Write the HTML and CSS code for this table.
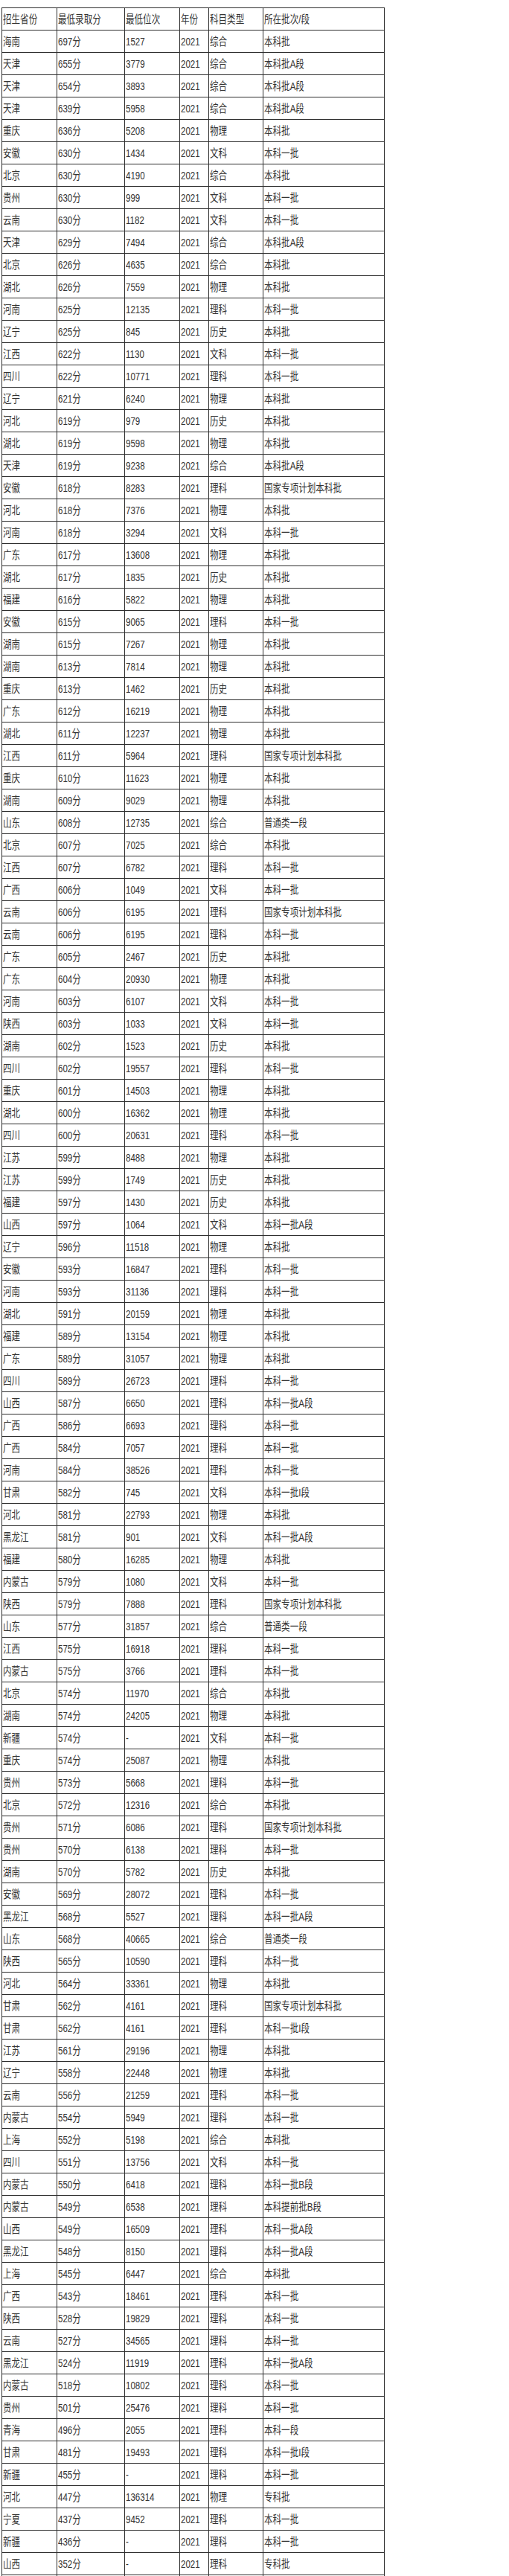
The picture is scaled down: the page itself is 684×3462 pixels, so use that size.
FILE: index.html
```html
<!DOCTYPE html>
<html lang="zh-CN">
<head>
<meta charset="utf-8">
<title>录取分数</title>
<link rel="stylesheet" href="styles.css">
</head>
<body>
<table class="scores">
<colgroup><col class="c1"><col class="c2"><col class="c3"><col class="c4"><col class="c5"><col class="c6"></colgroup>
<tbody>
<tr><td><span>招生省份</span></td><td><span>最低录取分</span></td><td><span>最低位次</span></td><td><span>年份</span></td><td><span>科目类型</span></td><td><span>所在批次/段</span></td></tr>
<tr><td><span>海南</span></td><td><span>697分</span></td><td><span>1527</span></td><td><span>2021</span></td><td><span>综合</span></td><td><span>本科批</span></td></tr>
<tr><td><span>天津</span></td><td><span>655分</span></td><td><span>3779</span></td><td><span>2021</span></td><td><span>综合</span></td><td><span>本科批A段</span></td></tr>
<tr><td><span>天津</span></td><td><span>654分</span></td><td><span>3893</span></td><td><span>2021</span></td><td><span>综合</span></td><td><span>本科批A段</span></td></tr>
<tr><td><span>天津</span></td><td><span>639分</span></td><td><span>5958</span></td><td><span>2021</span></td><td><span>综合</span></td><td><span>本科批A段</span></td></tr>
<tr><td><span>重庆</span></td><td><span>636分</span></td><td><span>5208</span></td><td><span>2021</span></td><td><span>物理</span></td><td><span>本科批</span></td></tr>
<tr><td><span>安徽</span></td><td><span>630分</span></td><td><span>1434</span></td><td><span>2021</span></td><td><span>文科</span></td><td><span>本科一批</span></td></tr>
<tr><td><span>北京</span></td><td><span>630分</span></td><td><span>4190</span></td><td><span>2021</span></td><td><span>综合</span></td><td><span>本科批</span></td></tr>
<tr><td><span>贵州</span></td><td><span>630分</span></td><td><span>999</span></td><td><span>2021</span></td><td><span>文科</span></td><td><span>本科一批</span></td></tr>
<tr><td><span>云南</span></td><td><span>630分</span></td><td><span>1182</span></td><td><span>2021</span></td><td><span>文科</span></td><td><span>本科一批</span></td></tr>
<tr><td><span>天津</span></td><td><span>629分</span></td><td><span>7494</span></td><td><span>2021</span></td><td><span>综合</span></td><td><span>本科批A段</span></td></tr>
<tr><td><span>北京</span></td><td><span>626分</span></td><td><span>4635</span></td><td><span>2021</span></td><td><span>综合</span></td><td><span>本科批</span></td></tr>
<tr><td><span>湖北</span></td><td><span>626分</span></td><td><span>7559</span></td><td><span>2021</span></td><td><span>物理</span></td><td><span>本科批</span></td></tr>
<tr><td><span>河南</span></td><td><span>625分</span></td><td><span>12135</span></td><td><span>2021</span></td><td><span>理科</span></td><td><span>本科一批</span></td></tr>
<tr><td><span>辽宁</span></td><td><span>625分</span></td><td><span>845</span></td><td><span>2021</span></td><td><span>历史</span></td><td><span>本科批</span></td></tr>
<tr><td><span>江西</span></td><td><span>622分</span></td><td><span>1130</span></td><td><span>2021</span></td><td><span>文科</span></td><td><span>本科一批</span></td></tr>
<tr><td><span>四川</span></td><td><span>622分</span></td><td><span>10771</span></td><td><span>2021</span></td><td><span>理科</span></td><td><span>本科一批</span></td></tr>
<tr><td><span>辽宁</span></td><td><span>621分</span></td><td><span>6240</span></td><td><span>2021</span></td><td><span>物理</span></td><td><span>本科批</span></td></tr>
<tr><td><span>河北</span></td><td><span>619分</span></td><td><span>979</span></td><td><span>2021</span></td><td><span>历史</span></td><td><span>本科批</span></td></tr>
<tr><td><span>湖北</span></td><td><span>619分</span></td><td><span>9598</span></td><td><span>2021</span></td><td><span>物理</span></td><td><span>本科批</span></td></tr>
<tr><td><span>天津</span></td><td><span>619分</span></td><td><span>9238</span></td><td><span>2021</span></td><td><span>综合</span></td><td><span>本科批A段</span></td></tr>
<tr><td><span>安徽</span></td><td><span>618分</span></td><td><span>8283</span></td><td><span>2021</span></td><td><span>理科</span></td><td><span>国家专项计划本科批</span></td></tr>
<tr><td><span>河北</span></td><td><span>618分</span></td><td><span>7376</span></td><td><span>2021</span></td><td><span>物理</span></td><td><span>本科批</span></td></tr>
<tr><td><span>河南</span></td><td><span>618分</span></td><td><span>3294</span></td><td><span>2021</span></td><td><span>文科</span></td><td><span>本科一批</span></td></tr>
<tr><td><span>广东</span></td><td><span>617分</span></td><td><span>13608</span></td><td><span>2021</span></td><td><span>物理</span></td><td><span>本科批</span></td></tr>
<tr><td><span>湖北</span></td><td><span>617分</span></td><td><span>1835</span></td><td><span>2021</span></td><td><span>历史</span></td><td><span>本科批</span></td></tr>
<tr><td><span>福建</span></td><td><span>616分</span></td><td><span>5822</span></td><td><span>2021</span></td><td><span>物理</span></td><td><span>本科批</span></td></tr>
<tr><td><span>安徽</span></td><td><span>615分</span></td><td><span>9065</span></td><td><span>2021</span></td><td><span>理科</span></td><td><span>本科一批</span></td></tr>
<tr><td><span>湖南</span></td><td><span>615分</span></td><td><span>7267</span></td><td><span>2021</span></td><td><span>物理</span></td><td><span>本科批</span></td></tr>
<tr><td><span>湖南</span></td><td><span>613分</span></td><td><span>7814</span></td><td><span>2021</span></td><td><span>物理</span></td><td><span>本科批</span></td></tr>
<tr><td><span>重庆</span></td><td><span>613分</span></td><td><span>1462</span></td><td><span>2021</span></td><td><span>历史</span></td><td><span>本科批</span></td></tr>
<tr><td><span>广东</span></td><td><span>612分</span></td><td><span>16219</span></td><td><span>2021</span></td><td><span>物理</span></td><td><span>本科批</span></td></tr>
<tr><td><span>湖北</span></td><td><span>611分</span></td><td><span>12237</span></td><td><span>2021</span></td><td><span>物理</span></td><td><span>本科批</span></td></tr>
<tr><td><span>江西</span></td><td><span>611分</span></td><td><span>5964</span></td><td><span>2021</span></td><td><span>理科</span></td><td><span>国家专项计划本科批</span></td></tr>
<tr><td><span>重庆</span></td><td><span>610分</span></td><td><span>11623</span></td><td><span>2021</span></td><td><span>物理</span></td><td><span>本科批</span></td></tr>
<tr><td><span>湖南</span></td><td><span>609分</span></td><td><span>9029</span></td><td><span>2021</span></td><td><span>物理</span></td><td><span>本科批</span></td></tr>
<tr><td><span>山东</span></td><td><span>608分</span></td><td><span>12735</span></td><td><span>2021</span></td><td><span>综合</span></td><td><span>普通类一段</span></td></tr>
<tr><td><span>北京</span></td><td><span>607分</span></td><td><span>7025</span></td><td><span>2021</span></td><td><span>综合</span></td><td><span>本科批</span></td></tr>
<tr><td><span>江西</span></td><td><span>607分</span></td><td><span>6782</span></td><td><span>2021</span></td><td><span>理科</span></td><td><span>本科一批</span></td></tr>
<tr><td><span>广西</span></td><td><span>606分</span></td><td><span>1049</span></td><td><span>2021</span></td><td><span>文科</span></td><td><span>本科一批</span></td></tr>
<tr><td><span>云南</span></td><td><span>606分</span></td><td><span>6195</span></td><td><span>2021</span></td><td><span>理科</span></td><td><span>国家专项计划本科批</span></td></tr>
<tr><td><span>云南</span></td><td><span>606分</span></td><td><span>6195</span></td><td><span>2021</span></td><td><span>理科</span></td><td><span>本科一批</span></td></tr>
<tr><td><span>广东</span></td><td><span>605分</span></td><td><span>2467</span></td><td><span>2021</span></td><td><span>历史</span></td><td><span>本科批</span></td></tr>
<tr><td><span>广东</span></td><td><span>604分</span></td><td><span>20930</span></td><td><span>2021</span></td><td><span>物理</span></td><td><span>本科批</span></td></tr>
<tr><td><span>河南</span></td><td><span>603分</span></td><td><span>6107</span></td><td><span>2021</span></td><td><span>文科</span></td><td><span>本科一批</span></td></tr>
<tr><td><span>陕西</span></td><td><span>603分</span></td><td><span>1033</span></td><td><span>2021</span></td><td><span>文科</span></td><td><span>本科一批</span></td></tr>
<tr><td><span>湖南</span></td><td><span>602分</span></td><td><span>1523</span></td><td><span>2021</span></td><td><span>历史</span></td><td><span>本科批</span></td></tr>
<tr><td><span>四川</span></td><td><span>602分</span></td><td><span>19557</span></td><td><span>2021</span></td><td><span>理科</span></td><td><span>本科一批</span></td></tr>
<tr><td><span>重庆</span></td><td><span>601分</span></td><td><span>14503</span></td><td><span>2021</span></td><td><span>物理</span></td><td><span>本科批</span></td></tr>
<tr><td><span>湖北</span></td><td><span>600分</span></td><td><span>16362</span></td><td><span>2021</span></td><td><span>物理</span></td><td><span>本科批</span></td></tr>
<tr><td><span>四川</span></td><td><span>600分</span></td><td><span>20631</span></td><td><span>2021</span></td><td><span>理科</span></td><td><span>本科一批</span></td></tr>
<tr><td><span>江苏</span></td><td><span>599分</span></td><td><span>8488</span></td><td><span>2021</span></td><td><span>物理</span></td><td><span>本科批</span></td></tr>
<tr><td><span>江苏</span></td><td><span>599分</span></td><td><span>1749</span></td><td><span>2021</span></td><td><span>历史</span></td><td><span>本科批</span></td></tr>
<tr><td><span>福建</span></td><td><span>597分</span></td><td><span>1430</span></td><td><span>2021</span></td><td><span>历史</span></td><td><span>本科批</span></td></tr>
<tr><td><span>山西</span></td><td><span>597分</span></td><td><span>1064</span></td><td><span>2021</span></td><td><span>文科</span></td><td><span>本科一批A段</span></td></tr>
<tr><td><span>辽宁</span></td><td><span>596分</span></td><td><span>11518</span></td><td><span>2021</span></td><td><span>物理</span></td><td><span>本科批</span></td></tr>
<tr><td><span>安徽</span></td><td><span>593分</span></td><td><span>16847</span></td><td><span>2021</span></td><td><span>理科</span></td><td><span>本科一批</span></td></tr>
<tr><td><span>河南</span></td><td><span>593分</span></td><td><span>31136</span></td><td><span>2021</span></td><td><span>理科</span></td><td><span>本科一批</span></td></tr>
<tr><td><span>湖北</span></td><td><span>591分</span></td><td><span>20159</span></td><td><span>2021</span></td><td><span>物理</span></td><td><span>本科批</span></td></tr>
<tr><td><span>福建</span></td><td><span>589分</span></td><td><span>13154</span></td><td><span>2021</span></td><td><span>物理</span></td><td><span>本科批</span></td></tr>
<tr><td><span>广东</span></td><td><span>589分</span></td><td><span>31057</span></td><td><span>2021</span></td><td><span>物理</span></td><td><span>本科批</span></td></tr>
<tr><td><span>四川</span></td><td><span>589分</span></td><td><span>26723</span></td><td><span>2021</span></td><td><span>理科</span></td><td><span>本科一批</span></td></tr>
<tr><td><span>山西</span></td><td><span>587分</span></td><td><span>6650</span></td><td><span>2021</span></td><td><span>理科</span></td><td><span>本科一批A段</span></td></tr>
<tr><td><span>广西</span></td><td><span>586分</span></td><td><span>6693</span></td><td><span>2021</span></td><td><span>理科</span></td><td><span>本科一批</span></td></tr>
<tr><td><span>广西</span></td><td><span>584分</span></td><td><span>7057</span></td><td><span>2021</span></td><td><span>理科</span></td><td><span>本科一批</span></td></tr>
<tr><td><span>河南</span></td><td><span>584分</span></td><td><span>38526</span></td><td><span>2021</span></td><td><span>理科</span></td><td><span>本科一批</span></td></tr>
<tr><td><span>甘肃</span></td><td><span>582分</span></td><td><span>745</span></td><td><span>2021</span></td><td><span>文科</span></td><td><span>本科一批I段</span></td></tr>
<tr><td><span>河北</span></td><td><span>581分</span></td><td><span>22793</span></td><td><span>2021</span></td><td><span>物理</span></td><td><span>本科批</span></td></tr>
<tr><td><span>黑龙江</span></td><td><span>581分</span></td><td><span>901</span></td><td><span>2021</span></td><td><span>文科</span></td><td><span>本科一批A段</span></td></tr>
<tr><td><span>福建</span></td><td><span>580分</span></td><td><span>16285</span></td><td><span>2021</span></td><td><span>物理</span></td><td><span>本科批</span></td></tr>
<tr><td><span>内蒙古</span></td><td><span>579分</span></td><td><span>1080</span></td><td><span>2021</span></td><td><span>文科</span></td><td><span>本科一批</span></td></tr>
<tr><td><span>陕西</span></td><td><span>579分</span></td><td><span>7888</span></td><td><span>2021</span></td><td><span>理科</span></td><td><span>国家专项计划本科批</span></td></tr>
<tr><td><span>山东</span></td><td><span>577分</span></td><td><span>31857</span></td><td><span>2021</span></td><td><span>综合</span></td><td><span>普通类一段</span></td></tr>
<tr><td><span>江西</span></td><td><span>575分</span></td><td><span>16918</span></td><td><span>2021</span></td><td><span>理科</span></td><td><span>本科一批</span></td></tr>
<tr><td><span>内蒙古</span></td><td><span>575分</span></td><td><span>3766</span></td><td><span>2021</span></td><td><span>理科</span></td><td><span>本科一批</span></td></tr>
<tr><td><span>北京</span></td><td><span>574分</span></td><td><span>11970</span></td><td><span>2021</span></td><td><span>综合</span></td><td><span>本科批</span></td></tr>
<tr><td><span>湖南</span></td><td><span>574分</span></td><td><span>24205</span></td><td><span>2021</span></td><td><span>物理</span></td><td><span>本科批</span></td></tr>
<tr><td><span>新疆</span></td><td><span>574分</span></td><td><span>-</span></td><td><span>2021</span></td><td><span>文科</span></td><td><span>本科一批</span></td></tr>
<tr><td><span>重庆</span></td><td><span>574分</span></td><td><span>25087</span></td><td><span>2021</span></td><td><span>物理</span></td><td><span>本科批</span></td></tr>
<tr><td><span>贵州</span></td><td><span>573分</span></td><td><span>5668</span></td><td><span>2021</span></td><td><span>理科</span></td><td><span>本科一批</span></td></tr>
<tr><td><span>北京</span></td><td><span>572分</span></td><td><span>12316</span></td><td><span>2021</span></td><td><span>综合</span></td><td><span>本科批</span></td></tr>
<tr><td><span>贵州</span></td><td><span>571分</span></td><td><span>6086</span></td><td><span>2021</span></td><td><span>理科</span></td><td><span>国家专项计划本科批</span></td></tr>
<tr><td><span>贵州</span></td><td><span>570分</span></td><td><span>6138</span></td><td><span>2021</span></td><td><span>理科</span></td><td><span>本科一批</span></td></tr>
<tr><td><span>湖南</span></td><td><span>570分</span></td><td><span>5782</span></td><td><span>2021</span></td><td><span>历史</span></td><td><span>本科批</span></td></tr>
<tr><td><span>安徽</span></td><td><span>569分</span></td><td><span>28072</span></td><td><span>2021</span></td><td><span>理科</span></td><td><span>本科一批</span></td></tr>
<tr><td><span>黑龙江</span></td><td><span>568分</span></td><td><span>5527</span></td><td><span>2021</span></td><td><span>理科</span></td><td><span>本科一批A段</span></td></tr>
<tr><td><span>山东</span></td><td><span>568分</span></td><td><span>40665</span></td><td><span>2021</span></td><td><span>综合</span></td><td><span>普通类一段</span></td></tr>
<tr><td><span>陕西</span></td><td><span>565分</span></td><td><span>10590</span></td><td><span>2021</span></td><td><span>理科</span></td><td><span>本科一批</span></td></tr>
<tr><td><span>河北</span></td><td><span>564分</span></td><td><span>33361</span></td><td><span>2021</span></td><td><span>物理</span></td><td><span>本科批</span></td></tr>
<tr><td><span>甘肃</span></td><td><span>562分</span></td><td><span>4161</span></td><td><span>2021</span></td><td><span>理科</span></td><td><span>国家专项计划本科批</span></td></tr>
<tr><td><span>甘肃</span></td><td><span>562分</span></td><td><span>4161</span></td><td><span>2021</span></td><td><span>理科</span></td><td><span>本科一批I段</span></td></tr>
<tr><td><span>江苏</span></td><td><span>561分</span></td><td><span>29196</span></td><td><span>2021</span></td><td><span>物理</span></td><td><span>本科批</span></td></tr>
<tr><td><span>辽宁</span></td><td><span>558分</span></td><td><span>22448</span></td><td><span>2021</span></td><td><span>物理</span></td><td><span>本科批</span></td></tr>
<tr><td><span>云南</span></td><td><span>556分</span></td><td><span>21259</span></td><td><span>2021</span></td><td><span>理科</span></td><td><span>本科一批</span></td></tr>
<tr><td><span>内蒙古</span></td><td><span>554分</span></td><td><span>5949</span></td><td><span>2021</span></td><td><span>理科</span></td><td><span>本科一批</span></td></tr>
<tr><td><span>上海</span></td><td><span>552分</span></td><td><span>5198</span></td><td><span>2021</span></td><td><span>综合</span></td><td><span>本科批</span></td></tr>
<tr><td><span>四川</span></td><td><span>551分</span></td><td><span>13756</span></td><td><span>2021</span></td><td><span>文科</span></td><td><span>本科一批</span></td></tr>
<tr><td><span>内蒙古</span></td><td><span>550分</span></td><td><span>6418</span></td><td><span>2021</span></td><td><span>理科</span></td><td><span>本科一批B段</span></td></tr>
<tr><td><span>内蒙古</span></td><td><span>549分</span></td><td><span>6538</span></td><td><span>2021</span></td><td><span>理科</span></td><td><span>本科提前批B段</span></td></tr>
<tr><td><span>山西</span></td><td><span>549分</span></td><td><span>16509</span></td><td><span>2021</span></td><td><span>理科</span></td><td><span>本科一批A段</span></td></tr>
<tr><td><span>黑龙江</span></td><td><span>548分</span></td><td><span>8150</span></td><td><span>2021</span></td><td><span>理科</span></td><td><span>本科一批A段</span></td></tr>
<tr><td><span>上海</span></td><td><span>545分</span></td><td><span>6447</span></td><td><span>2021</span></td><td><span>综合</span></td><td><span>本科批</span></td></tr>
<tr><td><span>广西</span></td><td><span>543分</span></td><td><span>18461</span></td><td><span>2021</span></td><td><span>理科</span></td><td><span>本科一批</span></td></tr>
<tr><td><span>陕西</span></td><td><span>528分</span></td><td><span>19829</span></td><td><span>2021</span></td><td><span>理科</span></td><td><span>本科一批</span></td></tr>
<tr><td><span>云南</span></td><td><span>527分</span></td><td><span>34565</span></td><td><span>2021</span></td><td><span>理科</span></td><td><span>本科一批</span></td></tr>
<tr><td><span>黑龙江</span></td><td><span>524分</span></td><td><span>11919</span></td><td><span>2021</span></td><td><span>理科</span></td><td><span>本科一批A段</span></td></tr>
<tr><td><span>内蒙古</span></td><td><span>518分</span></td><td><span>10802</span></td><td><span>2021</span></td><td><span>理科</span></td><td><span>本科一批</span></td></tr>
<tr><td><span>贵州</span></td><td><span>501分</span></td><td><span>25476</span></td><td><span>2021</span></td><td><span>理科</span></td><td><span>本科一批</span></td></tr>
<tr><td><span>青海</span></td><td><span>496分</span></td><td><span>2055</span></td><td><span>2021</span></td><td><span>理科</span></td><td><span>本科一段</span></td></tr>
<tr><td><span>甘肃</span></td><td><span>481分</span></td><td><span>19493</span></td><td><span>2021</span></td><td><span>理科</span></td><td><span>本科一批I段</span></td></tr>
<tr><td><span>新疆</span></td><td><span>455分</span></td><td><span>-</span></td><td><span>2021</span></td><td><span>理科</span></td><td><span>本科一批</span></td></tr>
<tr><td><span>河北</span></td><td><span>447分</span></td><td><span>136314</span></td><td><span>2021</span></td><td><span>物理</span></td><td><span>专科批</span></td></tr>
<tr><td><span>宁夏</span></td><td><span>437分</span></td><td><span>9452</span></td><td><span>2021</span></td><td><span>理科</span></td><td><span>本科一批</span></td></tr>
<tr><td><span>新疆</span></td><td><span>436分</span></td><td><span>-</span></td><td><span>2021</span></td><td><span>理科</span></td><td><span>本科一批</span></td></tr>
<tr><td><span>山西</span></td><td><span>352分</span></td><td><span>-</span></td><td><span>2021</span></td><td><span>理科</span></td><td><span>专科批</span></td></tr>
<tr><td><span>宁夏</span></td><td><span>330分</span></td><td><span>-</span></td><td><span>2021</span></td><td><span>理科</span></td><td><span>专科批</span></td></tr>
</tbody>
</table>
</body>
</html>
```

FILE: styles.css
```css
html, body {
  margin: 0;
  padding: 0;
  background: #ffffff;
}

body {
  padding: 10px 0 0 2px;
  font-family: "Liberation Sans", "Noto Sans CJK SC", sans-serif;
  color: #333333;
}

.scores {
  border-collapse: collapse;
  table-layout: fixed;
  width: 514px;
  font-size: 15px;
}

.scores .c1 { width: 74px; }
.scores .c2 { width: 91px; }
.scores .c3 { width: 74px; }
.scores .c4 { width: 39px; }
.scores .c5 { width: 73px; }
.scores .c6 { width: 163px; }

.scores tr {
  height: 30px;
}

.scores td {
  border: 1px solid #2e2e2e;
  padding: 0 0 0 1px;
  vertical-align: middle;
  white-space: nowrap;
  overflow: hidden;
  line-height: 18px;
}

.scores td span {
  display: inline-block;
  transform: scaleX(0.77);
  transform-origin: 0 50%;
}
```
